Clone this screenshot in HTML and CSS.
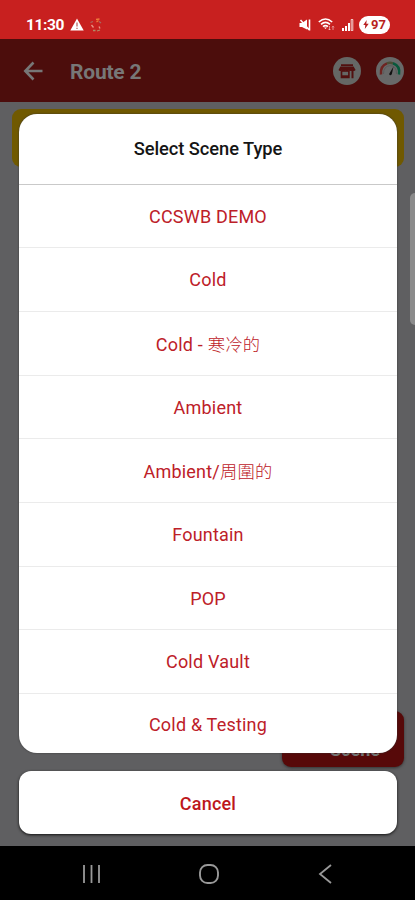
FILE: index.html
```html
<!DOCTYPE html>
<html lang="en">
<head>
<meta charset="utf-8">
<title>Select Scene Type</title>
<link rel="stylesheet" href="styles.css">
</head>
<body>
<div class="phone">
  <div class="status">
    <span class="time">11:30</span>
    <svg class="warn" width="14" height="13" viewBox="0 0 14 13"><path d="M7 .5 13.7 12.5H.3Z" fill="#fff"/><path d="M7 4.5v4M7 9.8v1.2" stroke="#b96a67" stroke-width="1.3"/></svg>
    <svg class="sync" width="12" height="14" viewBox="0 0 12 14" fill="none" stroke-width="1.3"><path d="M.5 4.5 3 3.5M9 3.5 11 5" stroke="#a56a62"/><path d="M6 1.5 9.5 1M6.5 4 8.5 2.5" stroke="#ee7b3a"/><path d="M1.5 7 3.5 9.5M9 8.5 10 10.5" stroke="#e99586"/><path d="M3 12.5H5.5M7 13 10 12" stroke="#b28a65"/></svg>
    <div class="signals">
      <svg width="12" height="12" viewBox="0 0 12 12"><path d="M.5 4H3L8 .5v10L3 8H.5Z" fill="#fff"/><path d="M1.5 1 10 10.8M10.5.5v11" stroke="#fff" stroke-width="1.6"/></svg>
      <svg width="17" height="13" viewBox="0 0 17 13" fill="none" stroke="#fff"><path d="M.8 4Q7.5-2 14.2 4M3 6.4Q7.5 2.2 12 6.4M5 8.7Q7.5 6.5 10 8.7" stroke-width="1.6"/><path d="M7.5 11 6 9.4h3Z" fill="#fff" stroke="none"/><path d="M11.5 8v4M10.3 10.8l1.2 1.2 1-1M15 12V8.3M14 9.3l1-1 1 1" stroke-width=".8" opacity=".65"/></svg>
      <svg width="12" height="12" viewBox="0 0 12 12" fill="#fff"><path d="M0 9h2v3H0zM3 7h2v5H3zM6 4h2v8H6z"/><path d="M9.2.5h1.6v11.2H9.2z" fill="none" stroke="#fff" stroke-width=".8"/></svg>
      <span class="battery"><svg width="6" height="9" viewBox="0 0 6 9"><path d="M3.7 0 .3 5h2L1.8 9 5.7 3.7H3.3Z" fill="#b91f20"/></svg>97</span>
    </div>
  </div>
  <div class="appbar">
    <svg class="back" width="20" height="20" viewBox="0 0 20 20" fill="none" stroke="#777" stroke-width="2.6"><path d="M10.5 1.5 2.3 10l8.2 8.5M2.3 10H19.5"/></svg>
    <span class="title">Route 2</span>
    <div class="actions">
      <svg width="28" height="28" viewBox="0 0 28 28"><circle cx="14" cy="14" r="14" fill="#656765"/><path d="M8 7.3h12v1.8H8zM7.4 9.6h13.2l2 3.4q-1.5 1.9-3.1.3-1.8 1.6-3.7 0-1.8 1.6-3.6 0-1.8 1.6-3.5 0-1.8 1.4-3.2-.3ZM7.7 13.5h9v7.7h-9zM18.5 13h2v8.2h-2z" fill="#51100f"/><path d="M9.3 14.8h5.8v3.5H9.3z" fill="#656765"/></svg>
      <svg width="28" height="28" viewBox="0 0 28 28" fill="none"><circle cx="14" cy="14" r="14" fill="#686969"/><path d="M5 17.5Q4 9 11 6.3" stroke="#6e2421" stroke-width="2.5"/><path d="M11 6.3Q14 5 17 6.3" stroke="#4b4d34" stroke-width="2.5"/><path d="M17 6.3Q24.5 9 23 17.5" stroke="#08593c" stroke-width="2.5"/><path d="M7.5 17Q7.5 9 14 8.7T20.5 17" stroke="#555" stroke-width=".7"/><path d="M17.5 9.5 15.8 17.2q-1.9 2-2.7-.3Z" fill="#111"/></svg>
    </div>
  </div>
  <div class="content">
    <div class="notice"></div>
    <div class="scene-button">Scene</div>
  </div>
  <div class="navbar">
    <svg width="20" height="20" viewBox="0 0 20 20" fill="none" stroke="#999" stroke-width="1.8"><path d="M2 1v18M9.5 1v18M17 1v18"/></svg>
    <svg width="20" height="20" viewBox="0 0 20 20" fill="none" stroke="#999" stroke-width="1.9"><rect x="1" y="1" width="18" height="18" rx="7.5"/></svg>
    <svg width="20" height="20" viewBox="0 0 20 20" fill="none" stroke="#999" stroke-width="1.8"><path d="M15 1 4 10 15 19"/></svg>
  </div>
  <div class="edge-handle"></div>
  <div class="sheet">
    <div class="options">
      <div class="heading">Select Scene Type</div>
      <div class="option">CCSWB DEMO</div>
      <div class="option">Cold</div>
      <div class="option mixed"><span>Cold - <span class="han">寒冷的</span></span></div>
      <div class="option">Ambient</div>
      <div class="option mixed"><span>Ambient/<span class="han">周圍的</span></span></div>
      <div class="option">Fountain</div>
      <div class="option">POP</div>
      <div class="option">Cold Vault</div>
      <div class="option">Cold &amp; Testing</div>
    </div>
    <div class="cancel">Cancel</div>
  </div>
</div>
</body>
</html>
```
FILE: styles.css
```css
* { box-sizing: border-box; }
body { margin: 0; font-family: Roboto, "Noto Sans CJK TC", sans-serif; }
svg { display: block; flex: none; }
.phone { position: relative; width: 415px; height: 900px; display: flex; flex-direction: column; overflow: hidden; background: #5f5f61; }
.status { height: 39px; flex: none; background: #c8201f; display: flex; align-items: center; padding: 10px 25px 0 26px; color: #fff; }
.time { width: 44px; font-size: 15.5px; font-weight: 700; letter-spacing: -.4px; }
.sync { margin-left: 6px; }
.signals { margin-left: auto; display: flex; align-items: center; gap: 7px; }
.battery { width: 31px; height: 18px; margin-left: -2px; border-radius: 9px; background: #fff; color: #b91f20; display: flex; align-items: center; justify-content: center; gap: 2px; font-size: 13px; font-weight: 700; }
.appbar { height: 63px; flex: none; background: #4c0d0c; display: flex; align-items: center; padding: 2px 11px 0 23px; }
.back { margin-top: -2px; }
.title { margin-left: 27px; color: #777; font-size: 21px; font-weight: 700; letter-spacing: -.2px; }
.actions { margin-left: auto; display: flex; gap: 15px; padding-bottom: 1px; }
.content { flex: 1; display: flex; flex-direction: column; justify-content: space-between; padding: 7px 11px 79px 12px; }
.notice { height: 58px; border-radius: 9px; background: #705900; }
.scene-button { align-self: flex-end; width: 122px; height: 56px; border-radius: 9px; background: #570909; color: #777; font-size: 18px; font-weight: 700; line-height: 20px; padding: 29px 24px 0 0; text-align: right; box-shadow: 0 1px 3px #333; }
.navbar { height: 54px; flex: none; background: #000; display: flex; justify-content: space-between; padding: 18px 79px 0 82px; }
.edge-handle { position: absolute; right: 0; top: 193px; width: 5px; height: 132px; border-radius: 5px 0 0 5px; background: #8b8b8b; }
.sheet { position: absolute; left: 19px; top: 114px; width: 378px; display: flex; flex-direction: column; gap: 18px; text-align: center; }
.options { height: 639px; border-radius: 18px; background: #fff; display: grid; grid-template-rows: 70px 63px 64px 64px 63px 64px 64px 63px 64px 60px; box-shadow: 0 0 2px #333; }
.heading, .option { display: flex; align-items: center; justify-content: center; }
.heading { padding-bottom: 2px; color: #151515; font-size: 18.3px; font-weight: 500; letter-spacing: -.05px; }
.option { border-top: 1px solid #ebebeb; padding-top: 1px; color: #bd2028; font-size: 18px; line-height: 22px; letter-spacing: .2px; }
.option.mixed { padding-top: 3px; }
.option:last-child { padding-top: 2px; }
.han { font-size: 17.3px; font-weight: 300; line-height: 1; }
.heading + .option { border-top-color: #c9c9c9; }
.cancel { height: 63px; border-radius: 12px; background: #fff; display: flex; align-items: center; justify-content: center; padding-top: 2px; color: #bd171b; font-size: 18px; font-weight: 500; letter-spacing: .2px; box-shadow: 0 1px 3px #111; }
```
